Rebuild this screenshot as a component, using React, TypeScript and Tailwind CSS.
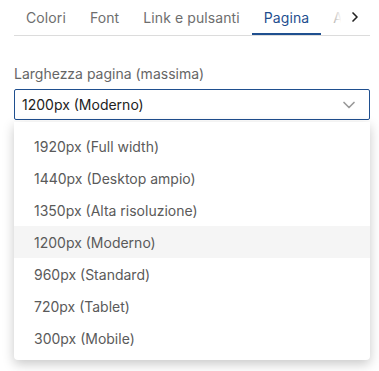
import { ChevronDown, ChevronRight } from "lucide-react";

const tabs = ["Colori", "Font", "Link e pulsanti", "Pagina", "Aspetto"];

const options = [
  "1920px (Full width)",
  "1440px (Desktop ampio)",
  "1350px (Alta risoluzione)",
  "1200px (Moderno)",
  "960px (Standard)",
  "720px (Tablet)",
  "300px (Mobile)",
];

export default function App() {
  return (
    <div className="w-[379px] h-[371px] bg-white pl-[14px] pr-[9px] font-['Inter','Noto_Sans',sans-serif] overflow-hidden">
      {/* Tabs */}
      <div className="relative flex border-b border-[#dcdcdc] overflow-hidden">
        {tabs.map((t) => (
          <div
            key={t}
            className={`shrink-0 px-3 pt-2 pb-[5px] text-[14px] tracking-[0.1px] leading-5 border-b-2 whitespace-nowrap ${
              t === "Pagina" ? "text-[#1f4f8f] border-[#1f4f8f]" : "text-[#6e6e6e] border-transparent"
            }`}
          >
            {t}
          </div>
        ))}
        <div className="absolute right-0 top-0 bottom-[2px] w-[38px] flex items-center justify-end pr-[7px] bg-gradient-to-r from-white/40 via-white via-25% to-white">
          <ChevronRight className="w-4 h-4 text-[#222]" strokeWidth={2.5} />
        </div>
      </div>

      {/* Field */}
      <div className="mt-7 text-[14px] leading-5 text-[#666]">Larghezza pagina (massima)</div>
      <div className="relative mt-[5px]">
        <div className="h-[31px] border border-[#1f4f8f] rounded-[2px] flex items-center justify-between pl-[7px] pr-[10px]">
          <span className="text-[14px] text-[#222]">1200px (Moderno)</span>
          <ChevronDown className="w-5 h-5 text-[#999]" strokeWidth={2} />
        </div>
        <div className="absolute left-0 right-0 top-[33px] bg-white rounded-b-[4px] pt-2 pb-[6px] shadow-[0_4px_12px_rgba(0,0,0,0.22)] z-10">
          {options.map((o) => (
            <div
              key={o}
              className={`h-8 flex items-center pl-5 text-[14px] text-[#5a5a5a] ${
                o.startsWith("1200") ? "bg-[#f5f5f5]" : ""
              }`}
            >
              {o}
            </div>
          ))}
        </div>
      </div>
    </div>
  );
}
